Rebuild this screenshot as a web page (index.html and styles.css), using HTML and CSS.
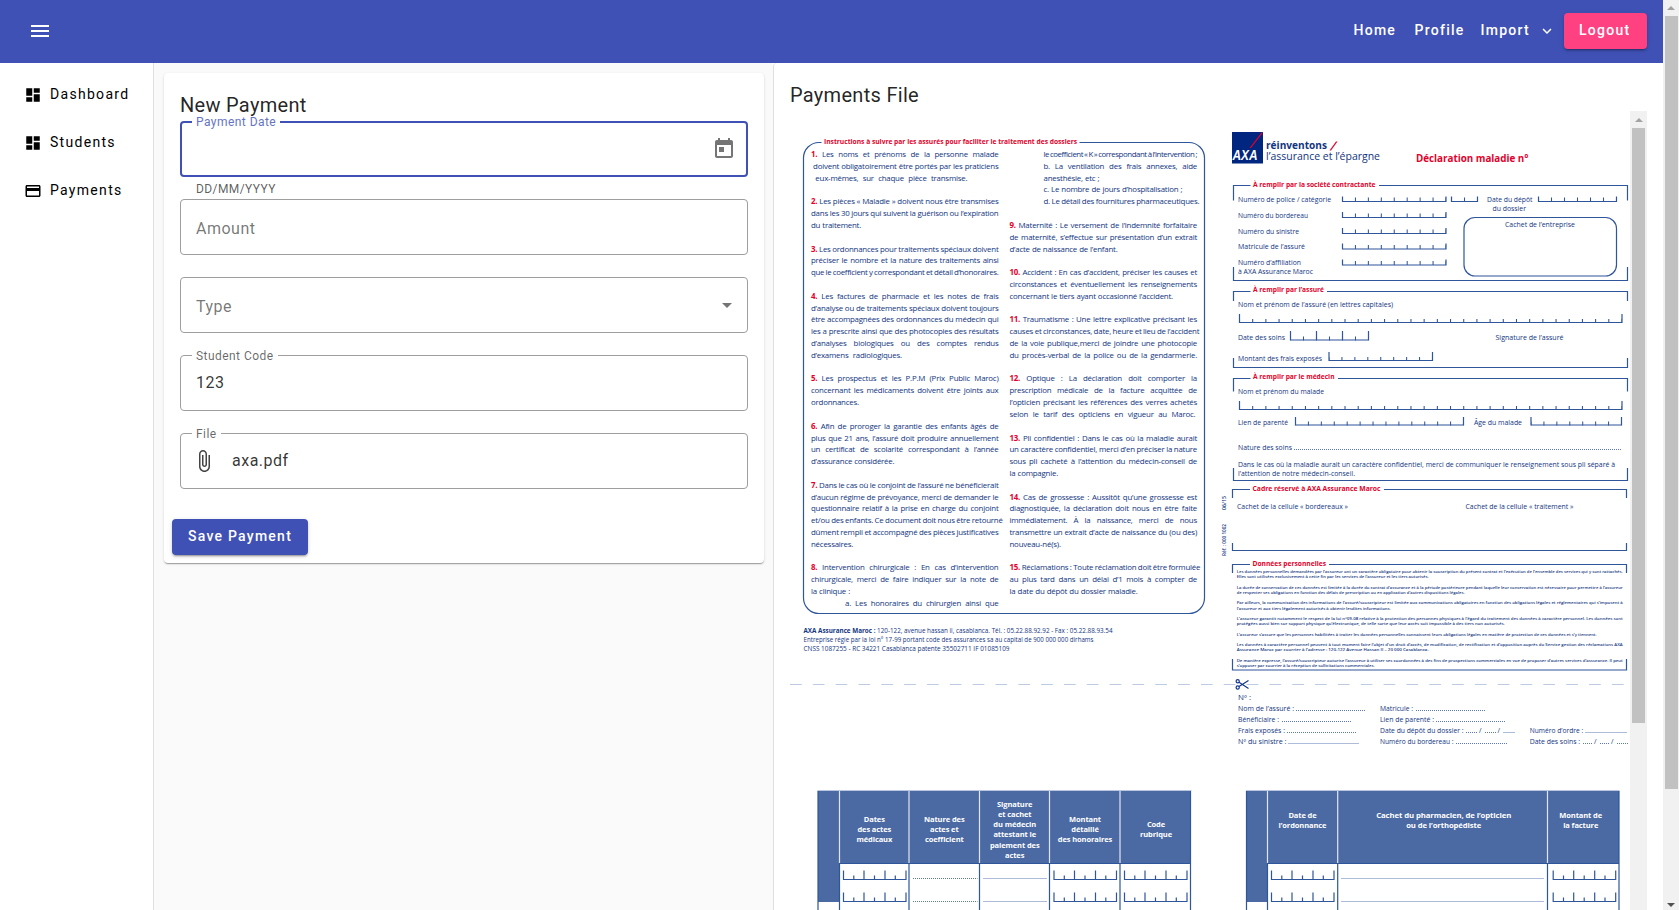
FILE: index.html
```html
<!DOCTYPE html>
<html lang="en">
<head>
<meta charset="utf-8">
<title>New Payment</title>
<link rel="stylesheet" href="styles.css">
</head>
<body>
<div class="app">
  <header class="toolbar">
    <svg class="menu" viewBox="0 0 24 24"><path d="M3 18h18v-2H3v2zm0-5h18v-2H3v2zm0-7v2h18V6H3z"/></svg>
    <nav class="links">
      <a class="link home">Home</a>
      <a class="link profile">Profile</a>
      <a class="link import">Import</a>
      <svg class="chevron" viewBox="0 0 24 24"><path d="M16.59 8.59 12 13.17 7.41 8.59 6 10l6 6 6-6z"/></svg>
      <a class="btn logout">Logout</a>
    </nav>
  </header>
  <div class="body">
    <aside class="sidebar">
      <a class="item"><svg viewBox="0 0 24 24"><path d="M3 13h8V3H3v10zm0 8h8v-6H3v6zm10 0h8V11h-8v10zm0-18v6h8V3h-8z"/></svg><span>Dashboard</span></a>
      <a class="item"><svg viewBox="0 0 24 24"><path d="M3 13h8V3H3v10zm0 8h8v-6H3v6zm10 0h8V11h-8v10zm0-18v6h8V3h-8z"/></svg><span>Students</span></a>
      <a class="item"><svg viewBox="0 0 24 24"><path d="M20 4H4c-1.11 0-1.99.89-1.99 2L2 18c0 1.11.89 2 2 2h16c1.11 0 2-.89 2-2V6c0-1.11-.89-2-2-2zm0 14H4v-6h16v6zm0-10H4V6h16v2z"/></svg><span>Payments</span></a>
    </aside>
    <main class="form-pane">
      <section class="card">
        <h2 class="title">New Payment</h2>
        <div class="field focused">
          <span class="float">Payment Date</span>
          <svg class="end-icon" viewBox="0 0 24 24"><path d="M19 3h-1V1h-2v2H8V1H6v2H5c-1.11 0-1.99.9-1.99 2L3 19c0 1.1.89 2 2 2h14c1.1 0 2-.9 2-2V5c0-1.1-.9-2-2-2zm0 16H5V8h14v11zM7 10h5v5H7z"/></svg>
        </div>
        <div class="hint">DD/MM/YYYY</div>
        <div class="field"><span class="placeholder">Amount</span></div>
        <div class="field"><span class="placeholder">Type</span><i class="caret"></i></div>
        <div class="field"><span class="float">Student Code</span><span class="value">123</span></div>
        <div class="field"><span class="float">File</span>
          <svg class="clip" viewBox="0 0 24 24"><path d="M16.5 6v11.5c0 2.21-1.79 4-4 4s-4-1.79-4-4V5c0-1.38 1.12-2.5 2.5-2.5s2.5 1.12 2.5 2.5v10.5c0 .55-.45 1-1 1s-1-.45-1-1V6H10v9.5c0 1.38 1.12 2.5 2.5 2.5s2.5-1.12 2.5-2.5V5c0-2.21-1.79-4-4-4S7 2.79 7 5v12.5c0 3.04 2.46 5.5 5.5 5.5s5.5-2.46 5.5-5.5V6h-1.5z"/></svg>
          <span class="value">axa.pdf</span></div>
        <a class="btn save">Save Payment</a>
      </section>
    </main>
    <section class="file-pane">
      <h2 class="title">Payments File</h2>
      <div class="viewer">
        <div class="sheet">
          <svg class="drawing" viewBox="790 111 840 799">
            <!-- instructions frame -->
            <path class="ln" d="M821.500 142.500H819a15.500 15.500 0 0 0-15.500 15.500V598a15.500 15.500 0 0 0 15.500 15.500H1189a15.500 15.500 0 0 0 15.500-15.500V158a15.500 15.500 0 0 0-15.500-15.500H1079.500"/>
            <text class="hd" x="824" y="144" textLength="253" lengthAdjust="spacingAndGlyphs">Instructions à suivre par les assurés pour faciliter le traitement des dossiers</text>
            <g class="sm">
              <text x="803.500" y="633" textLength="309" lengthAdjust="spacingAndGlyphs"><tspan class="b">AXA Assurance Maroc :</tspan> 120-122, avenue hassan ii, casablanca. Tél. : 05.22.88.92.92 - Fax : 05.22.88.93.54</text>
              <text x="803.500" y="642" textLength="290" lengthAdjust="spacingAndGlyphs">Entreprise régie par la loi n° 17-99 portant code des assurances sa au capital de 900 000 000 dirhams</text>
              <text x="803.500" y="650.500" textLength="206" lengthAdjust="spacingAndGlyphs">CNSS 1087255 - RC 34221 Casablanca patente 35502711 IF 01085109</text>
            </g>

            <!-- logo and heading -->
            <rect x="1232" y="132" width="31" height="31.500" fill="#00267f"/>
            <path d="M1249.500 148 1261.500 132.500h1.500l-12 15.500z" fill="#e4002b"/>
            <text class="axa" x="1232.500" y="160" textLength="25" lengthAdjust="spacingAndGlyphs">AXA</text>
            <text class="brand b" x="1266" y="148.500" textLength="61" lengthAdjust="spacingAndGlyphs">réinventons</text>
            <path d="M1329.500 150.500 1336 141.500h1.500l-6.500 9z" fill="#e4002b"/>
            <text class="brand" x="1266" y="160" textLength="114" lengthAdjust="spacingAndGlyphs">l’assurance et l’épargne</text>
            <text class="decl" x="1416" y="162.300" textLength="112.500" lengthAdjust="spacingAndGlyphs">Déclaration maladie n°</text>

            <!-- section brackets -->
            <path class="ln" d="M1233.500 200.500V185.500H1250.500M1379 185.500H1627.500V200.500M1233.500 267V280.500H1627.500V267"/>
            <path class="ln" d="M1233.500 301V291.500H1250.500M1327 291.500H1627.500V301M1233.500 358V367.500H1627.500V358"/>
            <path class="ln" d="M1233.500 391.500V378.500H1250.500M1338 378.500H1627.500V391.500M1233.500 468V480.500H1627.500V468"/>
            <path class="ln" d="M1232.500 498V489.500H1250M1384 489.500H1626.500V498M1232.500 543V550.500H1626.500V543"/>
            <path class="ln" d="M1232.500 573V564.500H1250M1329 564.500H1626.500V573M1232.500 659V670H1626.500V659"/>
            <g class="hd">
              <text x="1253" y="187" textLength="122.500" lengthAdjust="spacingAndGlyphs">À remplir par la société contractante</text>
              <text x="1253" y="292" textLength="71" lengthAdjust="spacingAndGlyphs">À remplir par l’assuré</text>
              <text x="1253" y="379" textLength="81.500" lengthAdjust="spacingAndGlyphs">À remplir par le médecin</text>
              <text x="1252.500" y="491" textLength="128" lengthAdjust="spacingAndGlyphs">Cadre réservé à AXA Assurance Maroc</text>
              <text x="1252.500" y="566" textLength="73.500" lengthAdjust="spacingAndGlyphs">Données personnelles</text>
            </g>
            <rect class="ln" x="1464" y="217.500" width="152.500" height="58.500" rx="11"/>

            <!-- field labels -->
            <g class="lb">
              <text x="1238" y="202" textLength="93" lengthAdjust="spacingAndGlyphs">Numéro de police / catégorie</text>
              <text x="1487" y="202" textLength="45.500" lengthAdjust="spacingAndGlyphs">Date du dépôt</text>
              <text x="1492.500" y="211" textLength="33.500" lengthAdjust="spacingAndGlyphs">du dossier</text>
              <text x="1238" y="218" textLength="70" lengthAdjust="spacingAndGlyphs">Numéro du bordereau</text>
              <text x="1238" y="234" textLength="61" lengthAdjust="spacingAndGlyphs">Numéro du sinistre</text>
              <text x="1238" y="249" textLength="67" lengthAdjust="spacingAndGlyphs">Matricule de l’assuré</text>
              <text x="1238" y="265" textLength="63" lengthAdjust="spacingAndGlyphs">Numéro d’affiliation</text>
              <text x="1238" y="274" textLength="75" lengthAdjust="spacingAndGlyphs">à AXA Assurance Maroc</text>
              <text x="1505" y="227" textLength="70" lengthAdjust="spacingAndGlyphs">Cachet de l’entreprise</text>
              <text x="1238" y="307" textLength="155" lengthAdjust="spacingAndGlyphs">Nom et prénom de l’assuré (en lettres capitales)</text>
              <text x="1238" y="340" textLength="47" lengthAdjust="spacingAndGlyphs">Date des soins</text>
              <text x="1495.500" y="340" textLength="68" lengthAdjust="spacingAndGlyphs">Signature de l’assuré</text>
              <text x="1238" y="361" textLength="84" lengthAdjust="spacingAndGlyphs">Montant des frais exposés</text>
              <text x="1238" y="394" textLength="86" lengthAdjust="spacingAndGlyphs">Nom et prénom du malade</text>
              <text x="1238" y="425" textLength="50" lengthAdjust="spacingAndGlyphs">Lien de parenté</text>
              <text x="1474" y="425" textLength="48" lengthAdjust="spacingAndGlyphs">Âge du malade</text>
              <text x="1238" y="450" textLength="54" lengthAdjust="spacingAndGlyphs">Nature des soins</text>
              <text x="1238" y="467" textLength="377" lengthAdjust="spacingAndGlyphs">Dans le cas où la maladie aurait un caractère confidentiel, merci de communiquer le renseignement sous pli séparé à</text>
              <text x="1238" y="476" textLength="117" lengthAdjust="spacingAndGlyphs">l’attention de notre médecin-conseil.</text>
              <text x="1237" y="509" textLength="111" lengthAdjust="spacingAndGlyphs">Cachet de la cellule « bordereaux »</text>
              <text x="1465.500" y="509" textLength="108" lengthAdjust="spacingAndGlyphs">Cachet de la cellule « traitement »</text>
            </g>
            <line class="dots" x1="1294" x2="1621" y1="449.500" y2="449.500"/>

            <!-- comb inputs: outline, then tick marks as dashes of a thick line -->
            <path class="ln" d="M1342.500 196.500V201.500H1446V196.500M1451.500 196.500V201.500H1477.500V196.500M1538.500 196.500V201.500H1616.500V196.500M1342.500 212V217.500H1446V212M1342.500 228V233.500H1446V228M1342.500 243.500V249H1446V243.500M1342.500 259.500V265H1446V259.500"/>
            <path class="tick" pathLength="8" d="M1342.500 199.500H1446"/>
            <path class="tick" pathLength="2" d="M1451.500 199.500H1477.500"/>
            <path class="tick" pathLength="6" d="M1538.500 199.500H1616.500"/>
            <path class="tick" pathLength="8" d="M1342.500 215.500H1446"/>
            <path class="tick" pathLength="8" d="M1342.500 231.500H1446"/>
            <path class="tick" pathLength="8" d="M1342.500 247H1446"/>
            <path class="tick" pathLength="8" d="M1342.500 263H1446"/>
            <path class="ln" d="M1239.500 314V322.500H1622V314M1290.500 331V340H1368.500V331M1316.500 331V340M1342.500 331V340M1329 352V360.500H1432.500V352M1239.500 401V409.500H1622V401M1295.500 417V425H1463.500V417M1531 417V425H1621.500V417"/>
            <path class="tick" pathLength="29" d="M1239.500 321H1622"/>
            <path class="tick" pathLength="6" d="M1290.500 338.500H1368.500"/>
            <path class="tick" pathLength="8" d="M1329 359H1432.500"/>
            <path class="tick" pathLength="29" d="M1239.500 408H1622"/>
            <path class="tick" pathLength="13" d="M1295.500 423.500H1463.500"/>
            <path class="tick" pathLength="7" d="M1531 423.500H1621.500"/>

            <g class="ref">
              <text transform="translate(1225.500 556) rotate(-90)" textLength="32" lengthAdjust="spacingAndGlyphs">Réf. : 000 1002</text>
              <text transform="translate(1225.500 510) rotate(-90)" textLength="14" lengthAdjust="spacingAndGlyphs">06/15</text>
            </g>

            <!-- privacy notice -->
            <g class="fine">
              <text x="1236.700" y="573" textLength="386" lengthAdjust="spacingAndGlyphs">Les données personnelles demandées par l’assureur ont un caractère obligatoire pour obtenir la souscription du présent contrat et l’exécution de l’ensemble des services qui y sont rattachés.</text>
              <text x="1236.700" y="578" textLength="192" lengthAdjust="spacingAndGlyphs">Elles sont utilisées exclusivement à cette fin par les services de l’assureur et les tiers autorisés.</text>
              <text x="1236.700" y="589" textLength="386" lengthAdjust="spacingAndGlyphs">La durée de conservation de ces données est limitée à la durée du contrat d’assurance et à la période postérieure pendant laquelle leur conservation est nécessaire pour permettre à l’assureur</text>
              <text x="1236.700" y="594" textLength="228" lengthAdjust="spacingAndGlyphs">de respecter ses obligations en fonction des délais de prescription ou en application d’autres dispositions légales.</text>
              <text x="1236.700" y="604.300" textLength="386" lengthAdjust="spacingAndGlyphs">Par ailleurs, la communication des informations de l’assuré/souscripteur est limitée aux communications obligatoires en fonction des obligations légales et réglementaires qui s’imposent à</text>
              <text x="1236.700" y="610" textLength="154" lengthAdjust="spacingAndGlyphs">l’assureur et aux tiers légalement autorisés à obtenir lesdites informations.</text>
              <text x="1236.700" y="620" textLength="386" lengthAdjust="spacingAndGlyphs">L’assureur garantit notamment le respect de la loi n°09-08 relative à la protection des personnes physiques à l’égard du traitement des données à caractère personnel. Les données sont</text>
              <text x="1236.700" y="625" textLength="268" lengthAdjust="spacingAndGlyphs">protégées aussi bien sur support physique qu’électronique, de telle sorte que leur accès soit impossible à des tiers non autorisés.</text>
              <text x="1236.700" y="636" textLength="360" lengthAdjust="spacingAndGlyphs">L’assureur s’assure que les personnes habilitées à traiter les données personnelles connaissent leurs obligations légales en matière de protection de ces données et s’y tiennent.</text>
              <text x="1236.700" y="646" textLength="386" lengthAdjust="spacingAndGlyphs">Les données à caractère personnel peuvent à tout moment faire l’objet d’un droit d’accès, de modification, de rectification et d’opposition auprès du Service gestion des réclamations AXA</text>
              <text x="1236.700" y="651" textLength="192" lengthAdjust="spacingAndGlyphs">Assurance Maroc par courrier à l’adresse : 120-122 Avenue Hassan II – 20 000 Casablanca.</text>
              <text x="1236.700" y="662" textLength="386" lengthAdjust="spacingAndGlyphs">De manière expresse, l’assuré/souscripteur autorise l’assureur à utiliser ses coordonnées à des fins de prospections commerciales en vue de proposer d’autres services d’assurance. Il peut</text>
              <text x="1236.700" y="667" textLength="138" lengthAdjust="spacingAndGlyphs">s’opposer par courrier à la réception de sollicitations commerciales.</text>
            </g>

            <!-- cut line -->
            <path d="M790 684.500H1625" fill="none" stroke="#bccae2" stroke-dasharray="11.700 11.130"/>
            <g fill="none" stroke="#12388a" stroke-width="1.200">
              <circle cx="1237.700" cy="681.300" r="1.600"/><circle cx="1237.700" cy="687.500" r="1.600"/>
              <path d="M1239 682.300 1248.500 688.500M1239 686.500 1248.500 680.500"/>
            </g>

            <!-- stub -->
            <g class="lb">
              <text x="1238" y="700" textLength="13" lengthAdjust="spacingAndGlyphs">Nº :</text>
              <text x="1238" y="711" textLength="56" lengthAdjust="spacingAndGlyphs">Nom de l’assuré :</text>
              <text x="1380" y="711" textLength="33" lengthAdjust="spacingAndGlyphs">Matricule :</text>
              <text x="1238" y="722" textLength="41" lengthAdjust="spacingAndGlyphs">Bénéficiaire :</text>
              <text x="1380" y="722" textLength="54" lengthAdjust="spacingAndGlyphs">Lien de parenté :</text>
              <text x="1238" y="733" textLength="47" lengthAdjust="spacingAndGlyphs">Frais exposés :</text>
              <text x="1380" y="733" textLength="83.500" lengthAdjust="spacingAndGlyphs">Date du dépôt du dossier :</text>
              <text x="1479" y="733">/</text><text x="1497.500" y="733">/</text>
              <text x="1529.700" y="733" textLength="53.500" lengthAdjust="spacingAndGlyphs">Numéro d’ordre :</text>
              <text x="1238" y="744" textLength="48.500" lengthAdjust="spacingAndGlyphs">Nº du sinistre :</text>
              <text x="1380" y="744" textLength="73.500" lengthAdjust="spacingAndGlyphs">Numéro du bordereau :</text>
              <text x="1529.700" y="744" textLength="50.500" lengthAdjust="spacingAndGlyphs">Date des soins :</text>
              <text x="1594" y="744">/</text><text x="1611" y="744">/</text>
            </g>
            <path class="dots" d="M1296 710.500H1366M1416 710.500H1486M1282 721.500H1352M1436 721.500H1506M1287 732.500H1357M1466 732.500H1477M1485 732.500H1496M1503.500 732.500H1515M1585.500 732.500H1627.500M1288.500 743.500H1359M1456 743.500H1507M1583 743.500H1592M1600 743.500H1609M1617 743.500H1628"/>

            <!-- medical acts table -->
            <path fill="#4b6aa3" d="M818 790.500H1191V863.500H839V902H818z"/>
            <path stroke="#b9c6df" d="M817.500 790.500H1191.500"/>
            <path class="wl" d="M839.500 791V863M909 791V863M979.500 791V863M1049.500 791V863M1120 791V863"/>
            <path class="ln" d="M839 863.500H1191M818 791V910M839.500 864V910M909 864V910M979.500 864V910M1049.500 864V910M1120 864V910M1190.500 791V910"/>
            <g class="th">
              <text x="874.300" y="821.500">Dates</text><text x="874.300" y="831.500">des actes</text><text x="874.300" y="841.500">médicaux</text>
              <text x="944.300" y="821.500">Nature des</text><text x="944.300" y="831.500">actes et</text><text x="944.300" y="841.500">coefficient</text>
              <text x="1014.700" y="806.500">Signature</text><text x="1014.700" y="816.500">et cachet</text><text x="1014.700" y="826.500">du médecin</text><text x="1014.700" y="836.500">attestant le</text><text x="1014.700" y="847.500">paiement des</text><text x="1014.700" y="857.500">actes</text>
              <text x="1085" y="821.500">Montant</text><text x="1085" y="831.500">détaillé</text><text x="1085" y="841.500">des honoraires</text>
              <text x="1156" y="826.500">Code</text><text x="1156" y="836.500">rubrique</text>
            </g>
            <path class="dots" d="M913 878.500H977.500M983.500 878.500H1047M913 901.500H977.500M983.500 901.500H1047"/>

            <!-- pharmacy table -->
            <path fill="#4b6aa3" d="M1246.500 790.500H1619V863.500H1267.500V902H1246.500z"/>
            <path stroke="#b9c6df" d="M1246 790.500H1619.500"/>
            <path class="wl" d="M1267.500 791V863M1337.700 791V863M1547.500 791V863"/>
            <path class="ln" d="M1267 863.500H1619M1246.500 791V910M1267.500 864V910M1337.700 864V910M1547.500 864V910M1619 791V910"/>
            <g class="th">
              <text x="1302.500" y="817.500">Date de</text><text x="1302.500" y="827.500">l’ordonnance</text>
              <text x="1443.700" y="817.500" textLength="135" lengthAdjust="spacingAndGlyphs">Cachet du pharmacien, de l’opticien</text><text x="1443.700" y="827.500" textLength="75" lengthAdjust="spacingAndGlyphs">ou de l’orthopédiste</text>
              <text x="1580.700" y="817.500">Montant de</text><text x="1580.700" y="827.500">la facture</text>
            </g>
            <path class="dots" d="M1341.500 878.500H1544M1341.500 901.500H1544"/>

            <!-- date combs in the table rows -->
            <defs>
              <path id="comb" class="ln" d="M.5 0V9H63V0M10.800 5V9M21 0V9M31.500 5V9M42 0V9M52.300 5V9"/>
            </defs>
            <use href="#comb" x="843" y="870.500"/><use href="#comb" x="1053.500" y="870.500"/><use href="#comb" x="1124" y="870.500"/>
            <use href="#comb" x="1271" y="870.500"/><use href="#comb" x="1552.700" y="870.500"/>
            <use href="#comb" x="843" y="892.500"/><use href="#comb" x="1053.500" y="892.500"/><use href="#comb" x="1124" y="892.500"/>
            <use href="#comb" x="1271" y="892.500"/><use href="#comb" x="1552.700" y="892.500"/>
          </svg>

          <div class="notes">
            <div class="col">
              <p><b>1.</b> Les noms et prénoms de la personne malade<br>&nbsp;doivent obligatoirement être portés par les praticiens<span class="end wide">&nbsp;eux-mêmes, sur chaque pièce transmise.</span></p>
              <p><b>2.</b> Les pièces « Maladie » doivent nous être transmises<br>dans les 30 jours qui suivent la guérison ou l’expiration<span class="end">du traitement.</span></p>
              <p><b>3.</b> Les ordonnances pour traitements spéciaux doivent<br>préciser le nombre et la nature des traitements ainsi<br><span class="tight">que le coefficient y correspondant et détail d’honoraires.</span></p>
              <p><b>4.</b> Les factures de pharmacie et les notes de frais<br>d’analyse ou de traitements spéciaux doivent toujours<br>être accompagnées des ordonnances du médecin qui<br>les a prescrite ainsi que des photocopies des résultats<br>d’analyses biologiques ou des comptes rendus<span class="end wide">d’examens radiologiques.</span></p>
              <p><b>5.</b> Les prospectus et les P.P.M (Prix Public Maroc)<br>concernant les médicaments doivent être joints aux<span class="end">ordonnances.</span></p>
              <p><b>6.</b> Afin de proroger la garantie des enfants âgés de<br>plus que 21 ans, l’assuré doit produire annuellement<br>un certificat de scolarité correspondant à l’année<span class="end">d’assurance considérée.</span></p>
              <p><b>7.</b> Dans le cas où le conjoint de l’assuré ne bénéficierait<br>d’aucun régime de prévoyance, merci de demander le<br>questionnaire relatif à la prise en charge du conjoint<br>et/ou des enfants. Ce document doit nous être retourné<br>dûment rempli et accompagné des pièces justificatives<span class="end">nécessaires.</span></p>
              <p><b>8.</b> Intervention chirurgicale : En cas d’intervention<br>chirurgicale, merci de faire indiquer sur la note de<span class="end">la clinique :</span><span class="sub">a. Les honoraires du chirurgien ainsi que</span></p>
            </div>
            <div class="col">
              <p class="sub"><span class="tighter">le coefficient « K » correspondant à l’intervention ;</span><br>b. La ventilation des frais annexes, aide<span class="end">anesthésie, etc ;</span><span class="end">c. Le nombre de jours d’hospitalisation ;</span>d. Le détail des fournitures pharmaceutiques.</p>
              <p><b>9.</b> Maternité : Le versement de l’indemnité forfaitaire<br>de maternité, s’effectue sur présentation d’un extrait<span class="end">d’acte de naissance de l’enfant.</span></p>
              <p><b>10.</b> Accident : En cas d’accident, préciser les causes et<br>circonstances et éventuellement les renseignements<span class="end">concernant le tiers ayant occasionné l’accident.</span></p>
              <p><b>11.</b> Traumatisme : Une lettre explicative précisant les<br>causes et circonstances, date, heure et lieu de l’accident<br>de la voie publique,merci de joindre une photocopie<br>du procès-verbal de la police ou de la gendarmerie.</p>
              <p><b>12.</b> Optique : La déclaration doit comporter la<br>prescription médicale de la facture acquittée de<br>l’opticien précisant les références des verres achetés<br>selon le tarif des opticiens en vigueur au Maroc.&nbsp;</p>
              <p><b>13.</b> Pli confidentiel : Dans le cas où la maladie aurait<br>un caractère confidentiel, merci d’en préciser la nature<br>sous pli cacheté à l’attention du médecin-conseil de<span class="end">la compagnie.</span></p>
              <p><b>14.</b> Cas de grossesse : Aussitôt qu’une grossesse est<br>diagnostiquée, la déclaration doit nous en être faite<br>immédiatement. À la naissance, merci de nous<br>transmettre un extrait d’acte de naissance du (ou des)<span class="end">nouveau-né(s).</span></p>
              <p><b>15.</b> Réclamations : Toute réclamation doit être formulée<br>au plus tard dans un délai d’1 mois à compter de<span class="end">la date du dépôt du dossier maladie.</span></p>
            </div>
          </div>
        </div>
        <div class="scroll inner"><i class="up"></i><span class="thumb"></span></div>
      </div>
    </section>
  </div>
</div>
<div class="scroll outer"><i class="up"></i><span class="thumb"></span><i class="down"></i></div>
</body>
</html>
```

FILE: styles.css
```css
* { box-sizing: border-box; }
body {
  margin: 0;
  height: 910px;
  display: flex;
  overflow: hidden;
  font-family: Roboto, "Liberation Sans", sans-serif;
  color: rgba(0, 0, 0, .87);
  background: #fff;
}
.app { flex: 1; display: flex; flex-direction: column; min-width: 0; }

/* top bar */
.toolbar {
  height: 63px;
  flex: none;
  display: flex;
  align-items: flex-start;
  justify-content: space-between;
  padding: 13px 16px 0 28px;
  background: #3f51b5;
  color: #fff;
}
.menu { width: 24px; height: 24px; fill: #fff; margin-top: 6px; }
.links { display: flex; align-items: center; height: 36px; font-size: 14px; font-weight: 500; letter-spacing: 1.25px; }
.link { line-height: 34px; height: 36px; }
.profile { margin-left: 18.500px; }
.import { margin-left: 16px; }
.chevron { width: 18px; height: 18px; fill: #fff; margin: 0 8px 0 8px; }
.btn {
  display: block;
  height: 36px;
  line-height: 35px;
  padding: 0 15px;
  border-radius: 4px;
  color: #fff;
  font-size: 14px;
  font-weight: 500;
  letter-spacing: 1.25px;
  white-space: nowrap;
  box-shadow: 0 3px 1px -2px rgba(0, 0, 0, .2), 0 2px 2px rgba(0, 0, 0, .14), 0 1px 5px rgba(0, 0, 0, .12);
}
.logout { width: 83px; line-height: 34px; background: #ff4081; }

.body { flex: 1; display: flex; min-height: 0; }

/* side navigation */
.sidebar { width: 154px; flex: none; padding-top: 8px; border-right: 1px solid #e0e0e0; }
.item {
  height: 48px;
  display: flex;
  align-items: center;
  gap: 8px;
  padding-left: 24px;
  color: #000;
  font-size: 14px;
  letter-spacing: 1.3px;
}
.item svg { width: 18px; height: 18px; }
.item span { padding-bottom: 2px; }

/* form */
.form-pane { width: 619px; flex: none; padding: 10px 9px 0 10px; background: #fafafa; }
.card {
  height: 490px;
  padding: 16px;
  background: #fff;
  border-radius: 4px;
  box-shadow: 0 2px 1px -1px rgba(0, 0, 0, .2), 0 1px 1px rgba(0, 0, 0, .14), 0 1px 3px rgba(0, 0, 0, .12);
}
.title {
  position: relative;
  z-index: 1;
  margin: 0;
  height: 32px;
  font-size: 20px;
  line-height: 32px;
  font-weight: 400;
  letter-spacing: .3px;
}
.field {
  position: relative;
  height: 56px;
  margin-bottom: 22px;
  padding: 0 15px;
  display: flex;
  align-items: center;
  border: 1px solid #9e9e9e;
  border-radius: 4px;
  font-size: 16px;
  letter-spacing: .5px;
}
.focused { border: 2px solid #3f51b5; margin-bottom: 0; padding: 0 10px; }
.float {
  position: absolute;
  left: 11px;
  top: -8px;
  padding: 0 4px;
  background: #fff;
  font-size: 12px;
  line-height: 16px;
  letter-spacing: .45px;
  color: rgba(0, 0, 0, .6);
}
.focused .float { left: 10px; top: -9px; color: #6574c4; }
.placeholder { color: rgba(0, 0, 0, .55); margin-top: 2px; }
.value { margin-top: -1px; color: rgba(0, 0, 0, .8); }
.end-icon { width: 24px; height: 24px; margin-left: auto; fill: #757575; }
.hint { height: 22px; padding: 4px 16px 0; font-size: 12px; line-height: 16px; letter-spacing: .4px; color: rgba(0, 0, 0, .65); }
.caret { margin: 0 0 0 auto; border: 5px solid transparent; border-top-color: #757575; border-bottom: 0; }
.clip { width: 24px; height: 24px; margin: 0 16px 0 -4px; fill: #444; }
.save { width: 136px; margin: 30px 0 0 -8px; padding-left: 16px; background: #3f51b5; }

/* document viewer */
.file-pane {
  flex: 1;
  padding: 16px 16px 0;
  display: flex;
  flex-direction: column;
  border-left: 1px solid #e0e0e0;
  border-radius: 4px 4px 0 0;
}
.viewer { flex: 1; display: flex; min-height: 0; }
.sheet { width: 840px; display: grid; overflow: hidden; background: #fff; }
.drawing, .notes { grid-area: 1 / 1; }
.drawing { width: 840px; height: 799px; font-family: "Open Sans", sans-serif; }
.drawing text { fill: #12357f; }
.ln { fill: none; stroke: #2f559b; stroke-width: 1.2; }
.wl { fill: none; stroke: #dfe6f1; stroke-width: 1.2; }
.tick { fill: none; stroke: #2f559b; stroke-width: 4; stroke-dasharray: .08 .92; stroke-dashoffset: .04; }
.dots { fill: none; stroke: #5b78b0; stroke-width: 1; stroke-dasharray: 1 1; }
.b { font-weight: 700; }
.drawing .hd, .drawing .hd text { fill: #e4002b; font-size: 7px; font-weight: 700; }
.sm { font-size: 6.200px; }
.lb { font-size: 6.800px; }
.fine { font-size: 4px; font-weight: 600; }
.ref { font-size: 5px; font-weight: 600; }
.brand { font-size: 11px; }
.drawing .decl { fill: #e4002b; font-size: 10.500px; font-weight: 700; }
.drawing .axa { fill: #fff; font: italic 700 14px "Liberation Sans", sans-serif; }
.drawing .th text { fill: #fff; font-size: 7.500px; font-weight: 700; text-anchor: middle; letter-spacing: -.1px; }

.notes {
  display: flex;
  gap: 11px;
  padding: 38px 0 0 21px;
  font-family: "Open Sans", sans-serif;
  font-size: 7.900px;
  line-height: 11.820px;
  letter-spacing: -.22px;
  word-spacing: -.3px;
  color: #12357f;
}
.col { width: 187.500px; }
.notes p { margin: 0 0 11.820px; white-space: nowrap; text-align: justify; text-align-last: justify; }
.notes b { color: #e4002b; }
.notes .end { display: block; text-align-last: left; word-spacing: .3px; }
.notes .wide { word-spacing: 2.500px; }
.notes .tight { letter-spacing: -.3px; word-spacing: -.5px; }
.notes .tighter { letter-spacing: -.45px; word-spacing: -.8px; }
.notes .sub { display: block; padding-left: 34px; }
.notes .sub .end { padding: 0; }

/* scrollbars */
.scroll { background: #f1f1f1; display: flex; flex-direction: column; align-items: center; flex: none; }
.inner { width: 17px; }
.outer { width: 16px; }
.thumb { width: 13px; background: #c1c1c1; }
.inner .thumb { height: 595px; }
.outer .thumb { height: 773px; margin-left: 1px; }
.up { border: 4px solid transparent; border-top: 0; border-bottom-color: #a3a3a3; margin: 7px 0 6px; }
.outer .up { margin: 6px 0; }
.down { border: 4px solid transparent; border-bottom: 0; border-top-color: #505050; margin: auto 0 3px; }
```
